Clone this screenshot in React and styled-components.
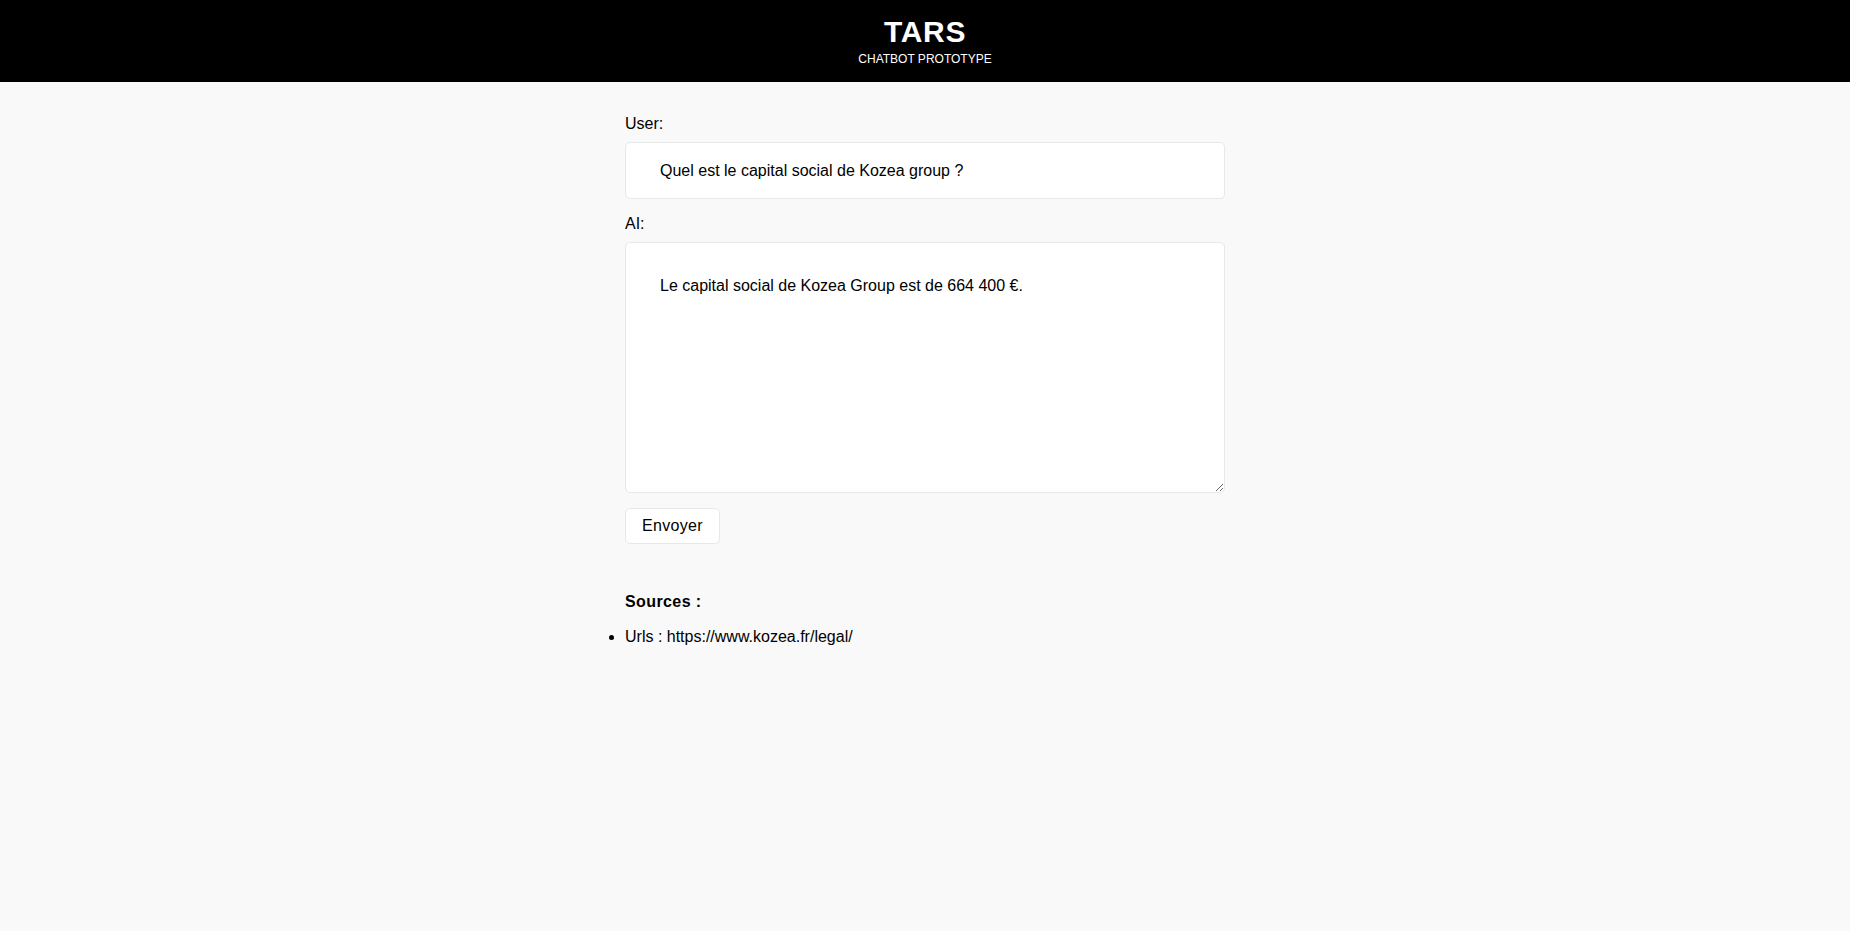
import React from 'react';
import styled, { createGlobalStyle } from 'styled-components';

const GlobalStyle = createGlobalStyle`
  html, body {
    margin: 0;
    padding: 0;
    background: #f9f9f9;
    font-family: "Liberation Sans", Arial, sans-serif;
    color: #000;
  }
`;

const Header = styled.header`
  background: #000;
  color: #fff;
  text-align: center;
  padding: 15px 0 16px;
`;

const Title = styled.h1`
  margin: 0 0 3px;
  font-size: 30px;
  font-weight: bold;
  letter-spacing: 0.7px;
  line-height: normal;
`;

const Subtitle = styled.p`
  margin: 0;
  font-size: 12px;
  text-transform: uppercase;
`;

const Main = styled.main`
  width: 600px;
  margin: 0 auto;
  padding-top: 33px;
`;

const Form = styled.form`
  display: flex;
  flex-direction: column;
  align-items: stretch;
`;

const Label = styled.label`
  font-size: 16px;
  margin-bottom: 9px;
  margin-top: ${(p) => (p.$spaced ? '16px' : '0')};
`;

const Field = styled.input`
  font-family: inherit;
  font-size: 16px;
  color: #000;
  background: #fff;
  border: 1px solid #e8e8e8;
  border-radius: 5px;
  padding: 19px 34px 18px;
  outline: none;
`;

const Answer = styled.textarea`
  font-family: inherit;
  font-size: 16px;
  color: #000;
  background: #fff;
  border: 1px solid #e8e8e8;
  border-radius: 5px;
  padding: 34px;
  height: 251px;
  box-sizing: border-box;
  outline: none;
`;

const SendButton = styled.button`
  align-self: flex-start;
  margin-top: 15px;
  font-family: inherit;
  font-size: 16px;
  letter-spacing: 0.3px;
  color: #000;
  background: #fff;
  border: 1px solid #e8e8e8;
  border-radius: 5px;
  padding: 8px 16px;
  cursor: pointer;
`;

const Sources = styled.section`
  margin-top: 49px;
`;

const SourcesTitle = styled.h4`
  margin: 0;
  font-size: 16px;
  font-weight: bold;
  letter-spacing: 0.4px;
`;

const SourceList = styled.ul`
  margin: 17px 0 0;
  padding: 0;
  font-size: 16px;
`;

function App() {
  return (
    <>
      <GlobalStyle />
      <Header>
        <Title>TARS</Title>
        <Subtitle>Chatbot prototype</Subtitle>
      </Header>
      <Main>
        <Form onSubmit={(e) => e.preventDefault()}>
          <Label htmlFor="user">User:</Label>
          <Field id="user" defaultValue="Quel est le capital social de Kozea group ?" />
          <Label htmlFor="ai" $spaced>AI:</Label>
          <Answer id="ai" defaultValue="Le capital social de Kozea Group est de 664 400 €." />
          <SendButton type="submit">Envoyer</SendButton>
        </Form>
        <Sources>
          <SourcesTitle>Sources :</SourcesTitle>
          <SourceList>
            <li>Urls : https://www.kozea.fr/legal/</li>
          </SourceList>
        </Sources>
      </Main>
    </>
  );
}

export default App;
